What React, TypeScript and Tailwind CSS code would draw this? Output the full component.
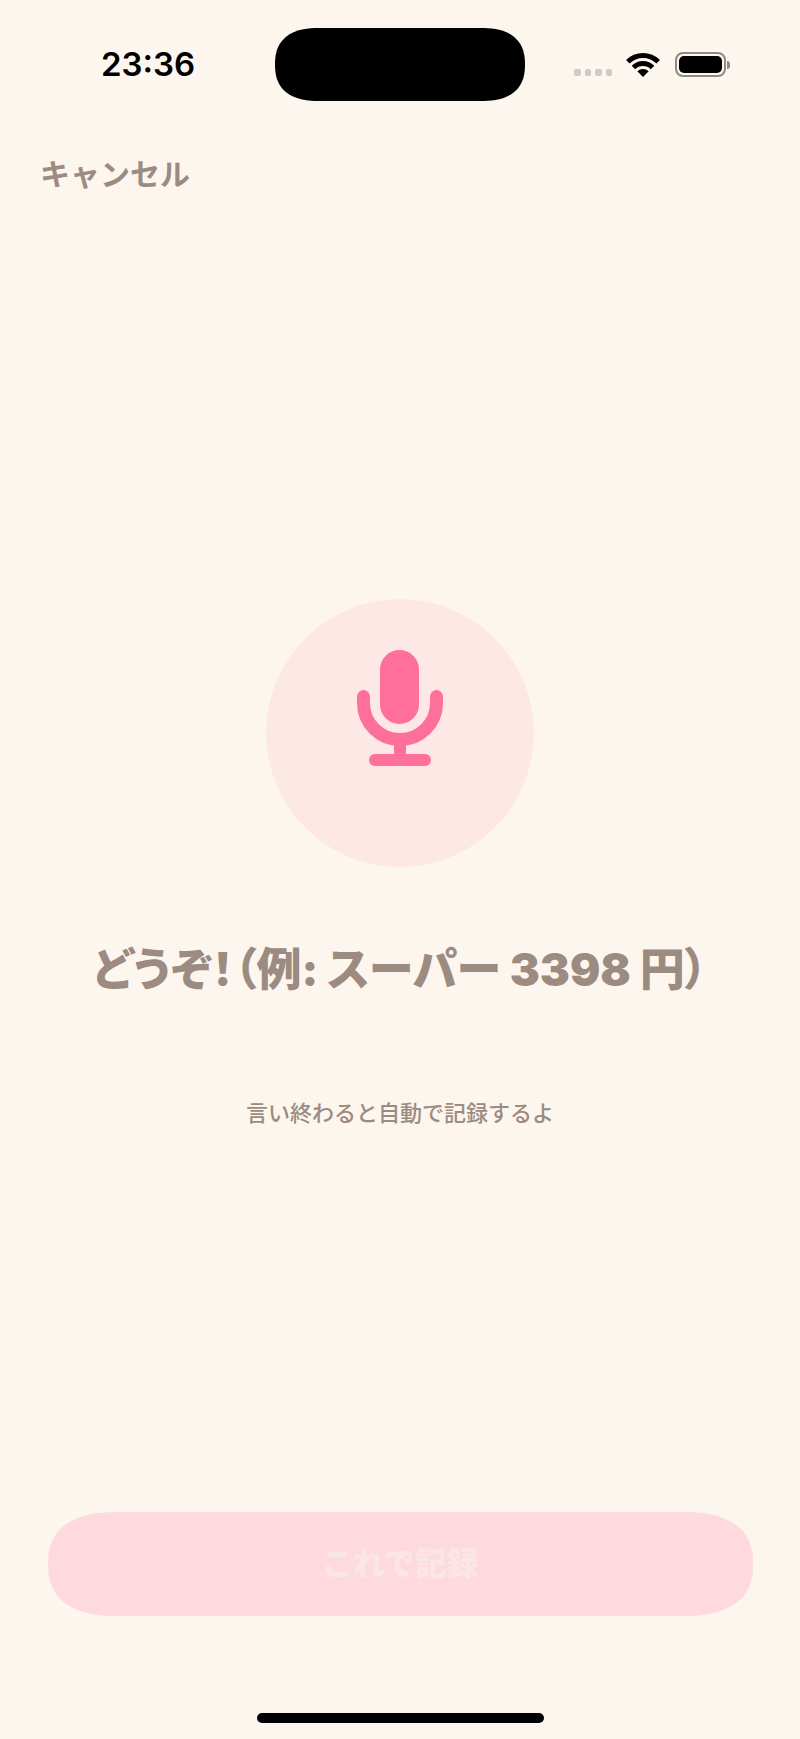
const font = { fontFamily: '"Inter", "Noto Sans CJK JP", sans-serif' };

const Wifi = () => (
  <svg width="34" height="24" viewBox="0 0 34 24" className="mb-0">
    <path d="M1.8 8.8A21.5 21.5 0 0 1 32.2 8.8" fill="none" stroke="#000" strokeWidth="5" />
    <path d="M7.45 14.45A13.5 13.5 0 0 1 26.55 14.45" fill="none" stroke="#000" strokeWidth="5" />
    <path d="M17 24L11.34 18.34A8 8 0 0 1 22.66 18.34Z" fill="#000" />
  </svg>
);

const Mic = () => (
  <svg width="86" height="116" viewBox="0 0 86 116">
    <rect x="23" y="0" width="39" height="74" rx="19.5" fill="#ff6f9c" />
    <path d="M6.5 46.5V53A36.5 36.5 0 0 0 79.5 53V46.5" fill="none" stroke="#ff6f9c" strokeWidth="13" strokeLinecap="round" />
    <rect x="37" y="90" width="12" height="18" fill="#ff6f9c" />
    <rect x="12" y="104" width="62" height="12" rx="6" fill="#ff6f9c" />
  </svg>
);

export default function App() {
  return (
    <div className="w-[800px] h-[1739px] bg-[#fdf6ef] flex flex-col overflow-hidden" style={font}>
      <div className="flex items-center h-[73px] mt-[28px]">
        <div className="w-[275px] pl-[101px] text-[33px] leading-none font-semibold text-black">23:36</div>
        <div className="w-[250px] h-[73px] bg-black rounded-[44px/36.5px] [corner-shape:superellipse(1.3)]" />
        <div className="flex items-end h-[25px] pl-[49px]">
          <div className="flex gap-[4px] mb-[1px]">
            <div className="w-[6.5px] h-[7px] rounded-[2px] bg-[#cfcac5]" />
            <div className="w-[6.5px] h-[7px] rounded-[2px] bg-[#cfcac5]" />
            <div className="w-[6.5px] h-[7px] rounded-[2px] bg-[#cfcac5]" />
            <div className="w-[6.5px] h-[7px] rounded-[2px] bg-[#cfcac5]" />
          </div>
          <div className="ml-[14px]">
            <Wifi />
          </div>
          <div className="ml-[15px] flex items-center">
            <div className="w-[51px] h-[25px] rounded-[8px] border-2 border-[#8f8a85] p-[2px]">
              <div className="w-full h-full rounded-[5px] bg-black" />
            </div>
            <div className="w-[3px] h-[8px] ml-[1px] rounded-r-full bg-[#8f8a85]" />
          </div>
        </div>
      </div>

      <div className="pl-[40px] mt-[53px] text-[30px] leading-[40px] font-bold text-[#9c8b80]">キャンセル</div>

      <div className="flex flex-col items-center mt-[405px]">
        <div className="w-[268px] h-[268px] rounded-full bg-[#fde8e6] flex items-center justify-center pb-[50px]">
          <Mic />
        </div>
        <h1 className="mt-[73px] text-[45px] leading-[60px] font-black text-[#9c8b80] whitespace-nowrap [font-feature-settings:'palt']">どうぞ！（例: スーパー 3398 円）</h1>
        <p className="mt-[98px] text-[22px] leading-[30px] font-medium text-[#9c8b80]">言い終わると自動で記録するよ</p>
      </div>

      <div className="mt-auto px-[47.5px]">
        <button className="w-full h-[104px] rounded-[70px/52px] [corner-shape:superellipse(1.3)] bg-[#fedadf] text-[31.5px] font-extrabold text-[#fbe6e7]">これで記録</button>
      </div>
      <div className="mt-[97px] mb-[16px] mx-auto w-[287px] h-[10px] rounded-full bg-black" />
    </div>
  );
}
